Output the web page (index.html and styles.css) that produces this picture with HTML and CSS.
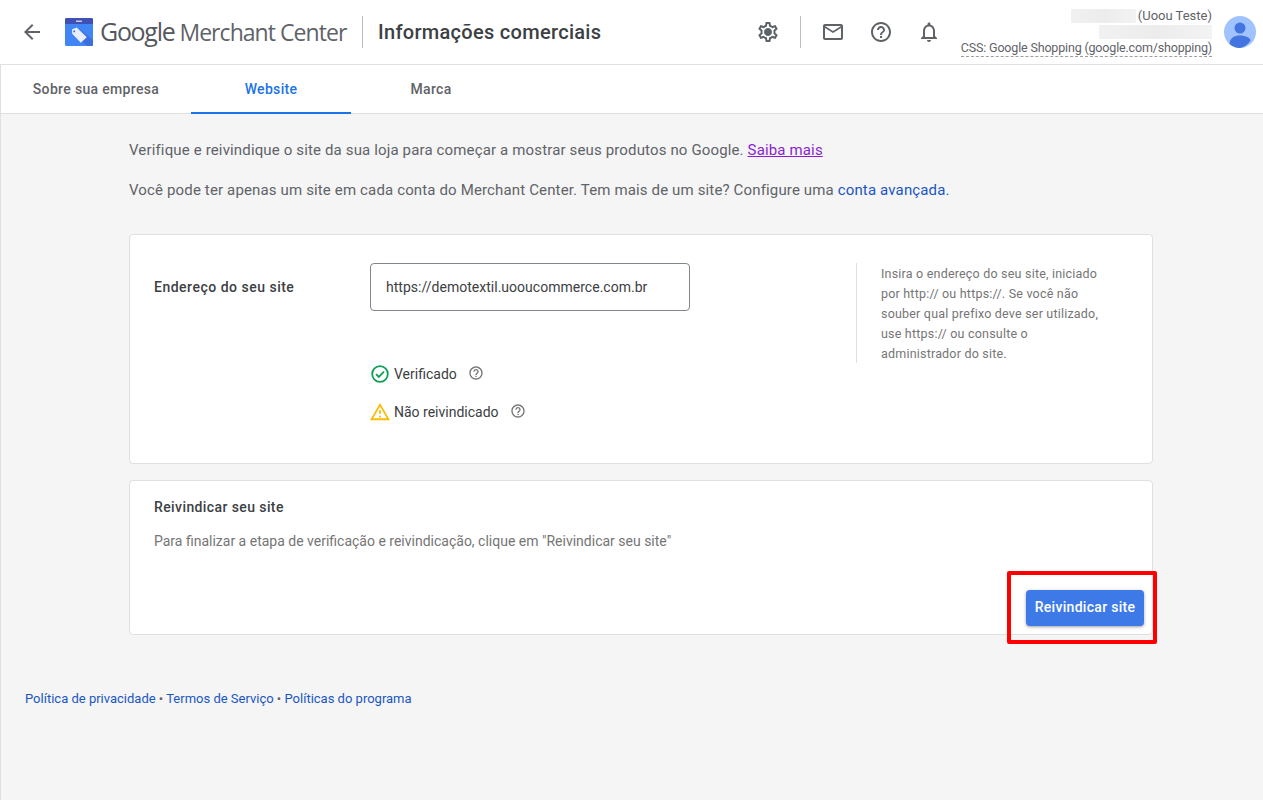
FILE: index.html
```html
<!DOCTYPE html>
<html lang="pt-BR">
<head>
<meta charset="utf-8">
<title>Google Merchant Center</title>
<link rel="stylesheet" href="styles.css">
</head>
<body>
<header class="topbar">
  <div class="brand">
    <svg class="back" width="24" height="24" viewBox="0 0 24 24"><path d="M20 11H7.8l5.6-5.6L12 4l-8 8 8 8 1.4-1.4L7.8 13H20z" fill="#5f6368"/></svg>
    <svg class="logo" width="28" height="28" viewBox="0 0 28 28">
      <rect width="28" height="28" rx="1.5" fill="#4285f4"/>
      <path d="M12 9.500L28 22v4.500a1.500 1.500 0 0 1-1.500 1.500H22L8 15z" fill="#3b6fdc"/>
      <path d="M0 1.500A1.500 1.500 0 0 1 1.500 0h25A1.500 1.500 0 0 1 28 1.500V6H0z" fill="#3f51b5"/>
      <rect x="11" y="2.500" width="6" height="1.500" fill="#c5cae9"/>
      <path fill-rule="evenodd" d="M7 11.300l4.800-1.800 10 9.800-6 5.400L7.200 15.800zM9.200 12.300a1 1 0 1 0 .01 0z" fill="#e8eefc"/>
    </svg>
    <span class="wordmark"><span class="wm-google">Google</span> Merchant Center</span>
    <span class="vrule"></span>
    <h1 class="title">Informações comerciais</h1>
  </div>
  <div class="tools">
    <svg class="tool" width="24" height="24" viewBox="0 0 24 24"><path fill="#5f6368" d="M19.430 12.980c.04-.32.070-.64.070-.98s-.030-.66-.070-.98l2.110-1.650c.19-.15.240-.42.120-.64l-2-3.460c-.12-.22-.39-.3-.61-.22l-2.490 1c-.52-.4-1.080-.73-1.690-.98l-.38-2.650A.49.49 0 0 0 14 2h-4c-.25 0-.46.18-.49.42l-.38 2.650c-.61.25-1.170.59-1.690.98l-2.490-1c-.23-.09-.49 0-.61.22l-2 3.460c-.13.22-.07.49.12.64l2.110 1.650c-.04.32-.07.65-.07.98s.030.66.07.98l-2.110 1.650c-.19.15-.24.42-.12.64l2 3.460c.12.22.39.3.61.22l2.490-1c.52.4 1.080.73 1.690.98l.38 2.650c.03.24.24.42.49.42h4c.25 0 .46-.18.49-.42l.38-2.650c.61-.25 1.170-.59 1.690-.98l2.490 1c.23.09.49 0 .61-.22l2-3.460c.12-.22.07-.49-.12-.64zM17.450 11.270c.04.31.05.52.05.73s-.020.43-.05.73l-.14 1.130.89.7 1.080.84-.7 1.210-1.270-.51-1.040-.42-.9.68c-.43.32-.84.56-1.250.73l-1.060.43-.16 1.130-.2 1.350h-1.400l-.19-1.350-.16-1.130-1.060-.43c-.43-.18-.83-.41-1.230-.71l-.91-.7-1.060.43-1.270.51-.7-1.210 1.080-.84.89-.7-.14-1.130c-.03-.31-.05-.54-.05-.74s.020-.43.05-.73l.14-1.130-.89-.7-1.080-.84.7-1.210 1.270.51 1.040.42.9-.68c.43-.32.84-.56 1.250-.73l1.060-.43.16-1.130.2-1.350h1.390l.19 1.350.16 1.130 1.060.43c.43.18.83.41 1.230.71l.91.7 1.060-.43 1.270-.51.7 1.210-1.070.85-.89.7zM12 8c-2.210 0-4 1.790-4 4s1.790 4 4 4 4-1.790 4-4-1.790-4-4-4z"/></svg>
    <span class="vrule tool-rule"></span>
    <svg class="tool mail" width="24" height="24" viewBox="0 0 24 24"><path fill="#5f6368" d="M22 6c0-1.100-.9-2-2-2H4c-1.100 0-2 .9-2 2v12c0 1.100.9 2 2 2h16c1.100 0 2-.9 2-2V6zm-2 0l-8 5-8-5h16zm0 12H4V8l8 5 8-5v10z"/></svg>
    <svg class="tool help" width="24" height="24" viewBox="0 0 24 24"><path fill="#5f6368" d="M11 18h2v-2h-2v2zm1-16C6.480 2 2 6.480 2 12s4.480 10 10 10 10-4.480 10-10S17.520 2 12 2zm0 18c-4.410 0-8-3.590-8-8s3.590-8 8-8 8 3.590 8 8-3.590 8-8 8zm0-14c-2.210 0-4 1.790-4 4h2c0-1.100.9-2 2-2s2 .9 2 2c0 2-3 1.750-3 5h2c0-2.250 3-2.500 3-5 0-2.210-1.790-4-4-4z"/></svg>
    <svg class="tool bell" width="24" height="24" viewBox="0 0 24 24"><path fill="#5f6368" d="M12 22c1.100 0 2-.9 2-2h-4c0 1.100.9 2 2 2zm6-6v-5c0-3.070-1.630-5.640-4.500-6.320V4c0-.83-.67-1.500-1.500-1.500s-1.500.67-1.500 1.500v.68C7.640 5.360 6 7.920 6 11v5l-2 2v1h16v-1l-2-2zm-2 1H8v-6c0-2.480 1.510-4.500 4-4.500s4 2.020 4 4.500v6z"/></svg>
    <div class="account">
      <div class="acc-line"><span class="blur blur-a"></span><span>(Uoou Teste)</span></div>
      <div class="acc-line"><span class="blur blur-b"></span></div>
      <div class="acc-line css-line">CSS: Google Shopping (google.com/shopping)</div>
    </div>
    <svg class="avatar" width="32" height="32" viewBox="0 0 32 32">
      <circle cx="16" cy="16" r="16" fill="#a0c3ff"/>
      <circle cx="16" cy="12" r="5.500" fill="#4374e0"/>
      <path d="M5.500 28c0-6 5-8.500 10.500-8.500S26.500 22 26.500 24.500A16 16 0 0 1 16 32a16 16 0 0 1-10.500-4z" fill="#4374e0"/>
    </svg>
  </div>
</header>

<nav class="tabs">
  <a class="tab tab-first">Sobre sua empresa</a>
  <a class="tab active">Website</a>
  <a class="tab">Marca</a>
</nav>

<main class="content">
  <div class="column">
    <p class="intro">Verifique e reivindique o site da sua loja para começar a mostrar seus produtos no Google. <a class="visited">Saiba mais</a></p>
    <p class="intro second">Você pode ter apenas um site em cada conta do Merchant Center. Tem mais de um site? Configure uma <a class="link">conta avançada.</a></p>

    <section class="card card-site">
      <div class="label">Endereço do seu site</div>
      <div class="site-main">
        <div class="input">https://demotextil.uooucommerce.com.br</div>
        <div class="status status-ok">
          <svg class="st-icon" width="20" height="20" viewBox="0 0 20 20"><circle cx="10" cy="10" r="7.800" fill="none" stroke="#0f9d58" stroke-width="1.800"/><path d="M6.100 10.200l2.700 2.700 5.200-5.200" fill="none" stroke="#0f9d58" stroke-width="1.800"/></svg>
          <span>Verificado</span>
          <svg class="q" width="16" height="16" viewBox="0 0 24 24"><path fill="#757575" d="M11 18h2v-2h-2v2zm1-16C6.480 2 2 6.480 2 12s4.480 10 10 10 10-4.480 10-10S17.520 2 12 2zm0 18c-4.410 0-8-3.590-8-8s3.590-8 8-8 8 3.590 8 8-3.590 8-8 8zm0-14c-2.210 0-4 1.790-4 4h2c0-1.100.9-2 2-2s2 .9 2 2c0 2-3 1.750-3 5h2c0-2.250 3-2.500 3-5 0-2.210-1.790-4-4-4z"/></svg>
        </div>
        <div class="status status-warn">
          <svg class="st-icon" width="20" height="20" viewBox="1 2 22 20"><path fill="#fbbc04" d="M12 5.990L19.530 19H4.470L12 5.990M12 2L1 21h22L12 2zm1 14h-2v2h2v-2zm0-6h-2v4h2v-4z"/></svg>
          <span>Não reivindicado</span>
          <svg class="q" width="16" height="16" viewBox="0 0 24 24"><path fill="#757575" d="M11 18h2v-2h-2v2zm1-16C6.480 2 2 6.480 2 12s4.480 10 10 10 10-4.480 10-10S17.520 2 12 2zm0 18c-4.410 0-8-3.590-8-8s3.590-8 8-8 8 3.590 8 8-3.590 8-8 8zm0-14c-2.210 0-4 1.790-4 4h2c0-1.100.9-2 2-2s2 .9 2 2c0 2-3 1.750-3 5h2c0-2.250 3-2.500 3-5 0-2.210-1.790-4-4-4z"/></svg>
        </div>
      </div>
      <aside class="hint">Insira o endereço do seu site, iniciado por http:// ou https://. Se você não souber qual prefixo deve ser utilizado, use https:// ou consulte o administrador do site.</aside>
    </section>

    <section class="card card-claim">
      <h2 class="label">Reivindicar seu site</h2>
      <p class="claim-text">Para finalizar a etapa de verificação e reivindicação, clique em "Reivindicar seu site"</p>
      <div class="claim-actions">
        <button class="primary">Reivindicar site</button>
        <span class="highlight"></span>
      </div>
    </section>
  </div>
  <footer class="foot"><a class="link">Política de privacidade</a> • <a class="link">Termos de Serviço</a> • <a class="link">Políticas do programa</a></footer>
</main>
</body>
</html>
```

FILE: styles.css
```css
* { box-sizing: border-box; }
html, body { margin: 0; height: 100%; }
body {
  font-family: Roboto, "Liberation Sans", sans-serif;
  background: #f5f5f5;
  color: #3c4043;
  overflow: hidden;
  display: flex;
  flex-direction: column;
  height: 800px;
}
.topbar {
  height: 65px;
  flex: none;
  background: #fff;
  border-bottom: 1px solid #e0e0e0;
  display: flex;
  align-items: center;
  justify-content: space-between;
  padding: 0 7px 1px 20px;
}
.brand { display: flex; align-items: center; }
.back { margin-right: 21px; }
.logo { margin-right: 7px; }
.wordmark {
  font-family: "Open Sans", sans-serif;
  font-size: 23px;
  letter-spacing: -0.95px;
  color: #5f6368;
  white-space: nowrap;
  width: 247px;
  margin-bottom: 2px;
}
.wm-google { font-size: 25px; color: #54585c; letter-spacing: -1.3px; }
.vrule { width: 1px; height: 32px; background: #bdbdbd; margin: 0 15px 0 15px; }
.title {
  margin: 0;
  font-family: Roboto, sans-serif;
  font-weight: 500;
  font-size: 20px;
  letter-spacing: 0.3px;
  color: #3c4043;
}
.tools { display: flex; align-items: center; }
.tool { flex: none; }
.tool-rule { margin: 0 20px 0 20px; }
.help { margin-left: 24px; }
.bell { margin-left: 24px; }
.account {
  margin-left: 19px;
  width: 252px;
  font-size: 13px;
  line-height: 16px;
  color: #5f6368;
  text-align: right;
  padding-top: 2px;
}
.acc-line { display: flex; justify-content: flex-end; align-items: center; height: 16px; }
.blur { display: block; height: 14px; background: linear-gradient(90deg, #f1f1f1, #ececec 50%, #f3f3f3); }
.blur-a { width: 65px; margin-right: 2px; }
.blur-b { width: 113px; }
.css-line {
  border-bottom: 1px dashed #9e9e9e;
  height: 17px;
  white-space: nowrap;
  width: 251px;
  margin-left: auto;
  font-size: 12.500px;
  letter-spacing: -0.17px;
}
.avatar { margin-left: 12px; flex: none; }

.tabs {
  height: 49px;
  flex: none;
  background: #fff;
  border-bottom: 1px solid #e0e0e0;
  border-left: 1px solid #e0e0e0;
  display: flex;
}
.tab {
  width: 160px;
  height: 48px;
  display: flex;
  align-items: center;
  justify-content: center;
  font-size: 14px;
  font-weight: 500;
  letter-spacing: .33px;
  color: #5f6368;
}
.tab-first { width: 190px; padding-right: 0; }
.active { color: #1a73e8; border-bottom: 2px solid #1a73e8; height: 49px; }

.content {
  flex: 1;
  border-left: 1px solid #e0e0e0;
  display: flex;
  flex-direction: column;
}
.column { width: 1024px; margin-left: 128px; padding-top: 26px; }
.intro { margin: 0; font-size: 15px; line-height: 20px; color: #5f6368; letter-spacing: .145px; white-space: nowrap; }
.second { margin-top: 20px; }
.visited { color: #8a1fd1; text-decoration: underline; }
.link { color: #1a56c4; }
.card {
  background: #fff;
  border: 1px solid #e0e0e0;
  border-radius: 4px;
}
.card-site {
  margin-top: 34px;
  height: 230px;
  padding: 28px 24px 0;
  display: flex;
  align-items: flex-start;
}
.label {
  margin: 0;
  font-size: 14px;
  font-weight: 500;
  letter-spacing: .5px;
  color: #3c4043;
  line-height: 20px;
}
.card-site .label { width: 216px; flex: none; padding-top: 14px; }
.card-claim .label { letter-spacing: .4px; }
.site-main { width: 320px; flex: none; }
.input {
  height: 48px;
  border: 1px solid #80868b;
  border-radius: 4px;
  padding: 0 15px;
  display: flex;
  align-items: center;
  font-size: 14px;
  letter-spacing: .02px;
  color: #3c4043;
}
.status { display: flex; align-items: center; font-size: 14px; color: #3c4043; height: 20px; }
.st-icon { margin-right: 4px; }
.status .q { margin-left: 11px; margin-top: -3px; }
.status-ok { margin-top: 53px; }
.status-warn { margin-top: 18px; }
.hint {
  margin-left: 166px;
  width: 248px;
  height: 100px;
  border-left: 1px solid #e0e0e0;
  padding: 1px 0 0 24px;
  font-size: 12.500px;
  line-height: 20px;
  color: #757575;
  letter-spacing: .2px;
}
.card-claim {
  margin-top: 16px;
  height: 155px;
  padding: 16px 24px 0;
}
.claim-text { margin: 14px 0 0; font-size: 14px; line-height: 20px; color: #757575; }
.claim-actions {
  display: flex;
  justify-content: flex-end;
  margin-top: 39px;
  margin-right: -16px;
  position: relative;
}
.primary {
  width: 118px;
  height: 36px;
  border: 0;
  border-radius: 4px;
  padding: 0 0 2px;
  background: #3d7ae7;
  color: #fff;
  font-family: Roboto, sans-serif;
  font-size: 14px;
  font-weight: 500;
  letter-spacing: .3px;
  box-shadow: 0 1px 3px rgba(60,64,67,.5);
}
.highlight {
  position: absolute;
  right: -13px;
  top: -19px;
  width: 150px;
  height: 73px;
  border: 4px solid #ff0000;
  border-radius: 2px;
}
.foot { margin: 54px 0 0 24px; font-size: 13px; line-height: 20px; color: #5f6368; }
```
